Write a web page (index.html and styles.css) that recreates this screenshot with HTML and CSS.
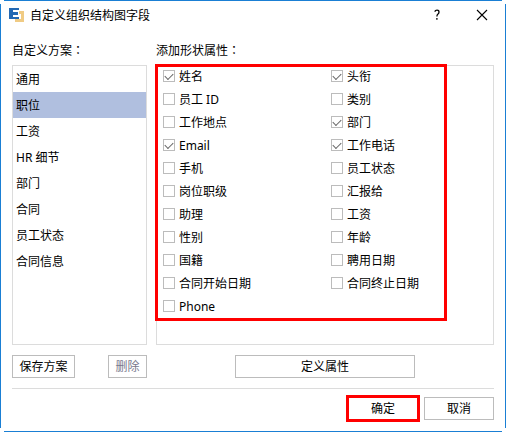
FILE: index.html
```html
<!DOCTYPE html>
<html lang="zh-CN">
<head>
    <meta charset="UTF-8">
    <meta name="viewport" content="width=device-width, initial-scale=1.0">
    <title>自定义组织结构图字段</title>
    <link rel="stylesheet" href="styles.css">
</head>
<body>
    <div class="dialog">
        <header class="title-bar">
            <svg class="logo" width="16" height="16" viewBox="0 0 16 16" shape-rendering="crispEdges">
                <path fill="#f0cb84" d="M10 4h5v11H6v-3h6V7h-2z"/>
                <path fill="#2469b3" d="M0 1h10v2H4v2h5v3H4v2h6v2H0z"/>
            </svg>
            <h1 class="title">自定义组织结构图字段</h1>
            <button class="title-btn" type="button" aria-label="帮助">
                <svg width="10" height="12" viewBox="0 0 10 12" fill="none" stroke="#000" stroke-width="1.3">
                    <path d="M2.7 2.6Q3.4 1.2 5 1.2Q7 1.2 7 3Q7 4.2 6 5Q4.9 5.8 4.9 7.6M4.9 9v1.8"/>
                </svg>
            </button>
            <button class="title-btn" type="button" aria-label="关闭">
                <svg width="12" height="12" viewBox="0 0 12 12" fill="none" stroke="#000" stroke-width="1.1">
                    <path d="M1 1l10 10M11 1L1 11"/>
                </svg>
            </button>
        </header>

        <main class="content">
            <section class="column">
                <label class="heading" for="schemes">自定义方案<span class="colon" lang="zh-TW">：</span></label>
                <select class="panel scheme-list" id="schemes" size="8">
                    <option>通用</option>
                    <option selected>职位</option>
                    <option>工资</option>
                    <option>HR 细节</option>
                    <option>部门</option>
                    <option>合同</option>
                    <option>员工状态</option>
                    <option>合同信息</option>
                </select>
                <div class="actions">
                    <button class="btn save-btn" type="button">保存方案</button>
                    <button class="btn delete-btn" type="button" disabled>删除</button>
                </div>
            </section>

            <section class="column">
                <h2 class="heading">添加形状属性<span class="colon" lang="zh-TW">：</span></h2>
                <div class="panel">
                    <div class="fields">
                        <label class="field"><input type="checkbox" checked>姓名</label>
                        <label class="field"><input type="checkbox" checked>头衔</label>
                        <label class="field"><input type="checkbox">员工 ID</label>
                        <label class="field"><input type="checkbox">类别</label>
                        <label class="field"><input type="checkbox">工作地点</label>
                        <label class="field"><input type="checkbox" checked>部门</label>
                        <label class="field"><input type="checkbox" checked>Email</label>
                        <label class="field"><input type="checkbox" checked>工作电话</label>
                        <label class="field"><input type="checkbox">手机</label>
                        <label class="field"><input type="checkbox">员工状态</label>
                        <label class="field"><input type="checkbox">岗位职级</label>
                        <label class="field"><input type="checkbox">汇报给</label>
                        <label class="field"><input type="checkbox">助理</label>
                        <label class="field"><input type="checkbox">工资</label>
                        <label class="field"><input type="checkbox">性别</label>
                        <label class="field"><input type="checkbox">年龄</label>
                        <label class="field"><input type="checkbox">国籍</label>
                        <label class="field"><input type="checkbox">聘用日期</label>
                        <label class="field"><input type="checkbox">合同开始日期</label>
                        <label class="field"><input type="checkbox">合同终止日期</label>
                        <label class="field"><input type="checkbox">Phone</label>
                    </div>
                </div>
                <div class="actions centered">
                    <button class="btn define-btn" type="button">定义属性</button>
                </div>
            </section>
        </main>

        <footer class="footer">
            <button class="btn footer-btn ok-btn" type="button">确定</button>
            <button class="btn footer-btn" type="button">取消</button>
        </footer>
    </div>
</body>
</html>
```
FILE: styles.css
```css
* {
    box-sizing: border-box;
    margin: 0;
    padding: 0;
}
body, button, input, select {
    font-family: "Noto Sans", "Noto Sans CJK SC", sans-serif;
    font-size: 12px;
    line-height: 18px;
    color: #000;
}
button {
    cursor: pointer;
}

/* the window frame is open at its four corners */
.dialog {
    display: flex;
    flex-direction: column;
    min-height: 100vh;
    padding: 0 12px;
    background:
        linear-gradient(#1a7fd4, #1a7fd4) center top / calc(100% - 8px) 1px no-repeat,
        linear-gradient(#1a7fd4, #1a7fd4) center bottom / calc(100% - 8px) 1px no-repeat,
        linear-gradient(#1a7fd4, #1a7fd4) left center / 1px calc(100% - 8px) no-repeat,
        linear-gradient(#1a7fd4, #1a7fd4) right center / 1px calc(100% - 8px) no-repeat,
        #fff;
}

.title-bar {
    display: flex;
    align-items: center;
    height: 30px;
    margin: 0 -10px 0 -3px;
}
.logo {
    margin-right: 5px;
}
.title {
    flex: 1;
    padding-top: 1px;
    font-size: 12px;
    font-weight: normal;
}
.title-btn {
    display: flex;
    align-items: center;
    justify-content: center;
    width: 45px;
    height: 28px;
    border: none;
    background: none;
}

.content {
    display: grid;
    grid-template-columns: 135fr 338fr;
    gap: 9px;
    flex: 1;
    padding: 12px 0 10px;
    border-bottom: 1px solid #dcdcdc;
}
.column {
    display: flex;
    flex-direction: column;
    min-width: 0;
}
.heading {
    margin-bottom: 5px;
    font-size: 12px;
    font-weight: normal;
}
.colon {
    font-family: "Noto Sans CJK TC", sans-serif;
    line-height: 1;
}
.panel {
    flex: 1;
    border: 1px solid #dcdcdc;
    background: #fff;
}

.scheme-list {
    width: 100%;
    border-radius: 0;
    outline: none;
    overflow: hidden;
}
.scheme-list option {
    min-height: 26px;
    padding: 4px 3px;
    color: #000;
}
.scheme-list option:checked {
    color: #000;
    background: #b0bfdf linear-gradient(#b0bfdf, #b0bfdf);
}

.fields {
    position: relative;
    display: grid;
    grid-template-columns: 168px 1fr;
    margin-top: -1px;
    padding: 0 6px 1px;
}
/* red frame round the field list, drawn over the panel border */
.fields::after {
    content: "";
    position: absolute;
    top: -1px;
    left: -2px;
    right: 46px;
    bottom: -2px;
    border: 3px solid #f00;
    pointer-events: none;
}
.field {
    display: flex;
    align-items: center;
    gap: 4px;
    height: 23px;
}
.field input {
    appearance: none;
    display: flex;
    align-items: center;
    justify-content: center;
    width: 12px;
    height: 12px;
    margin-bottom: 1px;
    border: 1px solid #bcbcbc;
    background: #fff;
}
.field input:checked::before {
    content: "";
    width: 7px;
    height: 4px;
    margin-top: -2px;
    border: solid #666;
    border-width: 0 0 1px 1px;
    transform: rotate(-45deg);
}

.actions {
    display: flex;
    justify-content: space-between;
    margin-top: 10px;
}
.centered {
    justify-content: center;
}
.btn {
    height: 23px;
    border: 1px solid #bcbcbc;
    background: #fff;
}
.save-btn {
    width: 63px;
}
.delete-btn {
    width: 39px;
    color: #78788c;
}
.define-btn {
    width: 180px;
}

.footer {
    display: flex;
    justify-content: flex-end;
    gap: 6px;
    padding: 8px 0 12px;
}
.footer-btn {
    width: 70px;
}
.ok-btn {
    border-color: #f00;
    box-shadow: 0 0 0 2px #f00;
}
```
